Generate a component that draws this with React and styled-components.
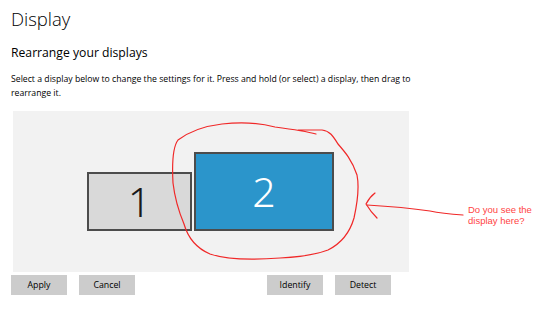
import styled, { createGlobalStyle } from "styled-components";

const GlobalStyle = createGlobalStyle`
  html, body {
    margin: 0;
    padding: 0;
    background: #ffffff;
  }
  body {
    font-family: "Open Sans", "Noto Sans", sans-serif;
    color: #000000;
  }
`;

const Page = styled.div`
  position: relative;
  width: 549px;
  height: 315px;
  padding: 5px 0 0 11px;
  box-sizing: border-box;
  overflow: hidden;
`;

const Title = styled.h1`
  margin: 0;
  font-size: 18.5px;
  font-weight: 300;
  line-height: 28px;
`;

const Subtitle = styled.h2`
  margin: 11px 0 0 0;
  font-size: 12.2px;
  font-weight: 400;
  line-height: 18px;
`;

const Hint = styled.p`
  margin: 10px 0 0 0;
  width: 405px;
  font-size: 8.7px;
  line-height: 14px;
`;

const Canvas = styled.div`
  position: relative;
  margin: 11px 0 0 2px;
  width: 396px;
  height: 161px;
  background: #f2f2f2;
`;

const Monitor = styled.div`
  position: absolute;
  box-sizing: border-box;
  display: flex;
  align-items: center;
  justify-content: center;
  border: 2px solid #4c4c4c;
  background: ${(p) => (p.$active ? "#2b95cb" : "#d9d9d9")};
  color: ${(p) => (p.$active ? "#ffffff" : "#1a1a1a")};
  font-family: "Noto Sans", "Open Sans", sans-serif;
  font-size: 41px;
  font-weight: 300;
  line-height: 1;
`;

const ButtonRow = styled.div`
  display: flex;
  justify-content: space-between;
  width: 380px;
  margin-top: 3px;
`;

const ButtonGroup = styled.div`
  display: flex;
  gap: 12px;
`;

const Button = styled.button`
  width: 56px;
  height: 20px;
  padding: 0;
  border: none;
  background: #cccccc;
  font-family: "Open Sans", "Noto Sans", sans-serif;
  font-size: 8.8px;
  color: #000000;
`;

const Annotation = styled.svg`
  position: absolute;
  left: 0;
  top: 0;
  pointer-events: none;
`;

const Note = styled.div`
  position: absolute;
  left: 468px;
  top: 205px;
  font-family: "Liberation Sans", Arial, sans-serif;
  font-size: 9.5px;
  line-height: 10.5px;
  color: #ff4444;
`;

const monitors = [
  { id: 1, left: 74, top: 61, width: 105, height: 59 },
  { id: 2, left: 181, top: 41, width: 140, height: 79, active: true },
];

export default function App() {
  return (
    <>
      <GlobalStyle />
      <Page>
        <Title>Display</Title>
        <Subtitle>Rearrange your displays</Subtitle>
        <Hint>
          Select a display below to change the settings for it. Press and hold
          (or select) a display, then drag to rearrange it.
        </Hint>
        <Canvas>
          {monitors.map((m) => (
            <Monitor
              key={m.id}
              $active={m.active}
              style={{ left: m.left, top: m.top, width: m.width, height: m.height }}
            >
              {m.id}
            </Monitor>
          ))}
        </Canvas>
        <ButtonRow>
          <ButtonGroup>
            <Button>Apply</Button>
            <Button>Cancel</Button>
          </ButtonGroup>
          <ButtonGroup>
            <Button>Identify</Button>
            <Button>Detect</Button>
          </ButtonGroup>
        </ButtonRow>
        <Annotation width="549" height="315" viewBox="0 0 549 315">
          <g fill="none" stroke="#f02828" strokeWidth="1.2" strokeLinecap="round" strokeLinejoin="round">
            <path d="M316 134 C 305 131, 290 129, 275 127 C 260 123, 240 122, 222 124 C 205 126, 190 131, 178 140 C 172 148, 172 165, 173 183 C 175 200, 179 212, 184 224 C 188 238, 196 248, 210 254 C 228 260, 255 260, 280 258 C 300 257, 315 255, 328 250 C 342 243, 350 232, 354 218 C 358 200, 359 185, 357 175 C 352 160, 345 152, 338 144 C 333 136, 330 131, 322 130 L 298 130" />
            <path d="M463 215 C 450 214, 440 213, 430 211 C 410 208, 385 206, 367 205" />
            <path d="M375 193 C 371 196, 368 200, 366 204 C 369 209, 373 214, 377 218" />
          </g>
        </Annotation>
        <Note>
          Do you see the
          <br />
          display here?
        </Note>
      </Page>
    </>
  );
}
